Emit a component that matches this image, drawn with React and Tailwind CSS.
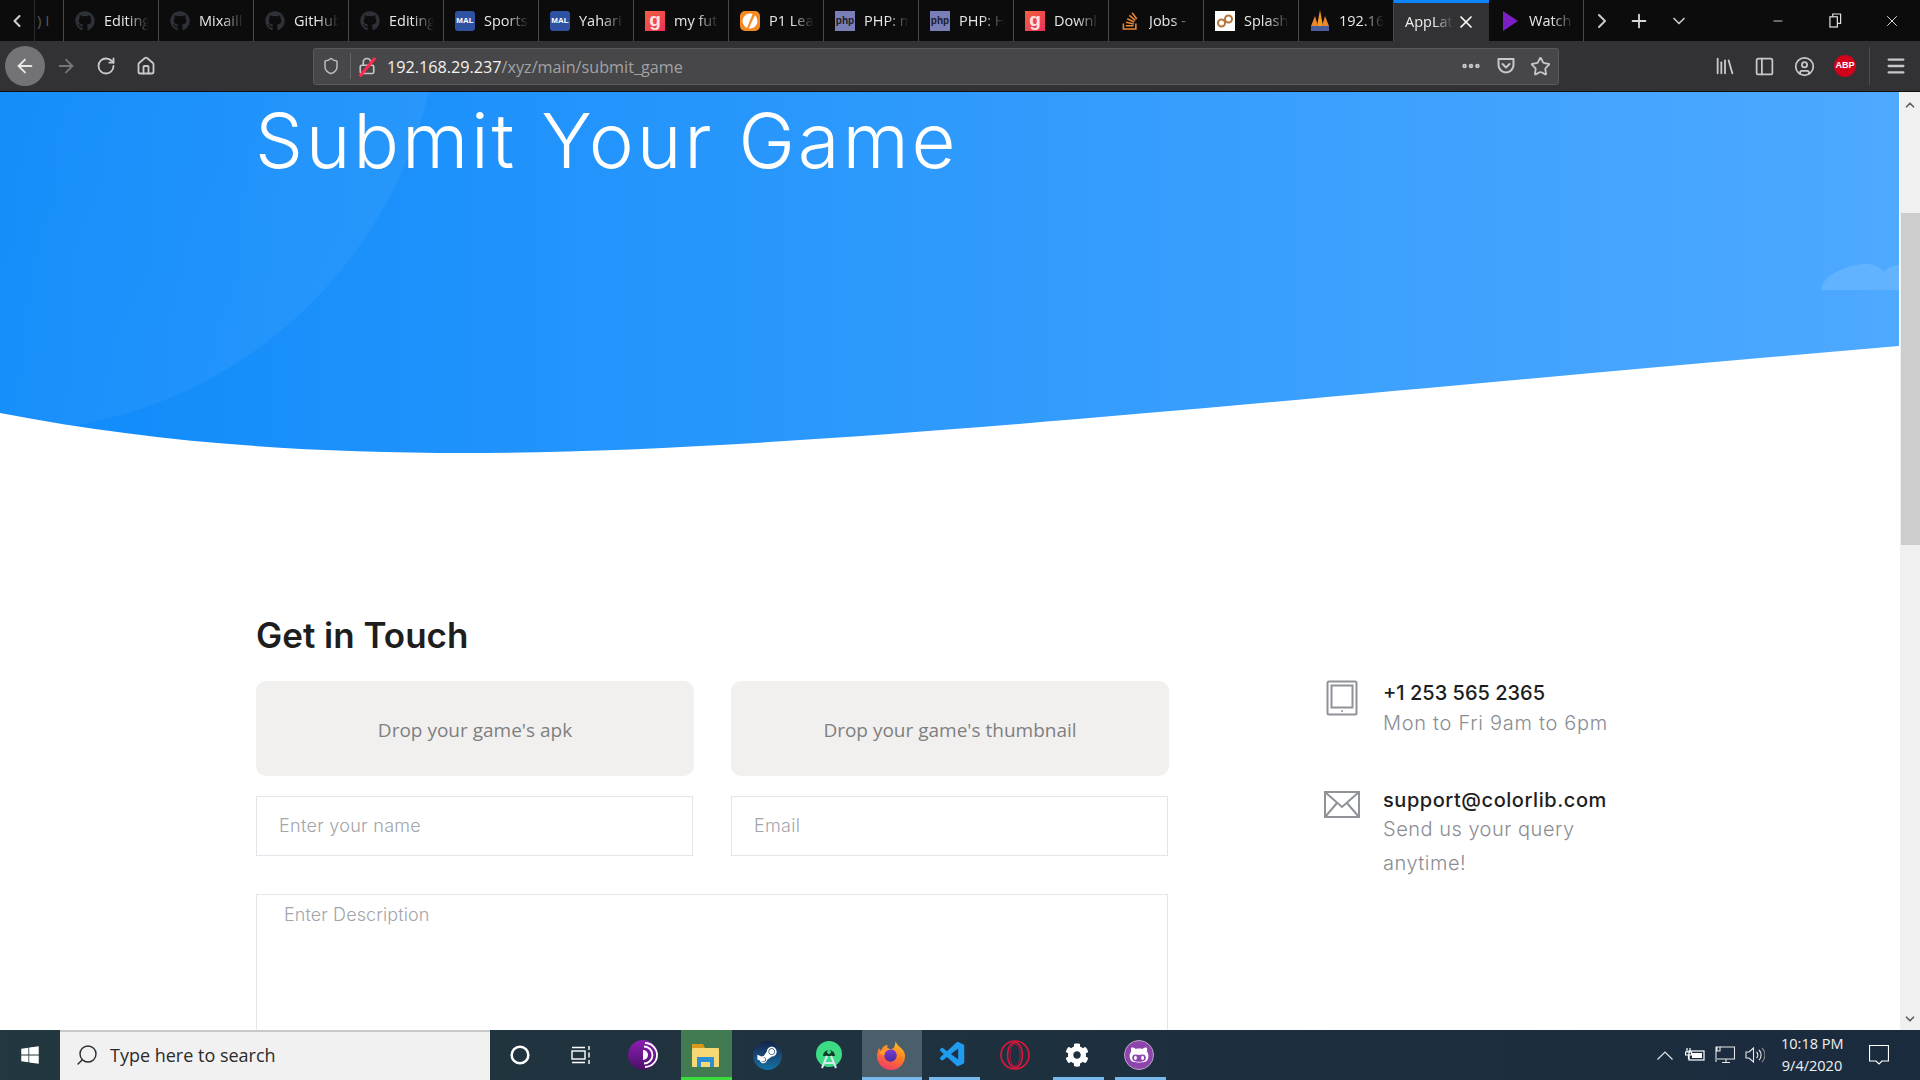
import React from 'react';
import {
  ArrowLeft,
  ArrowRight,
  RotateCw,
  Home,
  ChevronLeft,
  ChevronRight,
  ChevronDown,
  ChevronUp,
  Plus,
  Minus,
  X,
  Shield,
  Lock,
  Ellipsis,
  Star,
  Library,
  PanelLeft,
  CircleUser,
  Menu,
  Search,
  Circle,
} from 'lucide-react';
import { FaGithub, FaGithubAlt, FaWindows, FaStackOverflow, FaSteamSymbol, FaCog } from 'react-icons/fa';
import { VscVscode } from 'react-icons/vsc';

const Fav = ({ type }) => {
  if (type === 'gh') return <FaGithub className="w-5 h-5 text-[#2e3238]" />;
  if (type === 'mal')
    return (
      <div className="w-5 h-5 rounded-[3px] bg-[#2e51a2] text-white text-[8px] font-bold flex items-center justify-center font-['Liberation_Sans',sans-serif]">
        MAL
      </div>
    );
  if (type === 'g')
    return (
      <div className="w-5 h-5 bg-gradient-to-br from-[#f2603b] to-[#ec2c5c] text-[#ffe3dc] text-[19px] font-bold flex items-center justify-center leading-none pb-[3px] font-['Liberation_Sans',sans-serif]">
        g
      </div>
    );
  if (type === 'p1')
    return (
      <div className="w-5 h-5 rounded-[5px] bg-[#f58a23] flex items-center justify-center">
        <svg viewBox="0 0 20 20" className="w-5 h-5">
          <circle cx="10" cy="10" r="7.5" fill="#fff" />
          <path d="M13 2 L7 17 L9 17 L15 4 Z" fill="#f58a23" />
        </svg>
      </div>
    );
  if (type === 'php')
    return (
      <div className="w-5 h-[20px] bg-[#7a7fb8] text-[#1c1c28] text-[10px] font-bold flex items-center justify-center font-['Liberation_Sans',sans-serif]">
        php
      </div>
    );
  if (type === 'so') return <FaStackOverflow className="w-5 h-5 text-[#e8873a]" />;
  if (type === 'splash')
    return (
      <div className="w-5 h-5 bg-white flex items-center justify-center">
        <svg viewBox="0 0 20 20" className="w-5 h-5" fill="none" stroke="#b5763a" strokeWidth="2">
          <circle cx="6.5" cy="12" r="3.5" />
          <circle cx="13.5" cy="8" r="3.5" />
        </svg>
      </div>
    );
  if (type === 'paa')
    return (
      <svg viewBox="0 0 20 22" className="w-5 h-[22px]">
        <path d="M10 0 L13 16 L7 16 Z" fill="#f59a23" />
        <path d="M5 6 L8 16 L1 16 Z" fill="#e8872b" />
        <path d="M15 6 L19 16 L12 16 Z" fill="#e8872b" />
        <rect x="1" y="16" width="18" height="5" fill="#4a5a9a" />
      </svg>
    );
  if (type === 'play')
    return (
      <svg viewBox="0 0 20 22" className="w-5 h-[22px]">
        <path d="M3 1 L18 11 L3 21 Z" fill="#7b1fc4" />
      </svg>
    );
  return null;
};

const tabs = [
  { icon: 'gh', label: 'Editing' },
  { icon: 'gh', label: 'Mixaill' },
  { icon: 'gh', label: 'GitHub' },
  { icon: 'gh', label: 'Editing' },
  { icon: 'mal', label: 'Sports' },
  { icon: 'mal', label: 'Yahari' },
  { icon: 'g', label: 'my fut' },
  { icon: 'p1', label: 'P1 Lea' },
  { icon: 'php', label: 'PHP: m' },
  { icon: 'php', label: 'PHP: H' },
  { icon: 'g', label: 'Downl' },
  { icon: 'so', label: 'Jobs -' },
  { icon: 'splash', label: 'Splash' },
  { icon: 'paa', label: '192.16' },
  { active: true, label: 'AppLat' },
  { icon: 'play', label: 'Watch' },
];

const TabBar = () => (
  <div className="h-[41px] bg-[#0c0c0d] flex items-stretch shrink-0 font-['Open_Sans',sans-serif]">
    <div className="w-[35px] flex items-center justify-center border-r border-[#2c2c2e]">
      <ChevronLeft className="w-5 h-5 text-[#d0d0d0]" strokeWidth={2.5} />
    </div>
    <div className="w-[29px] border-r border-[#4a4a4c] flex items-center overflow-hidden pl-[2px] text-[15px] text-[#55595e] whitespace-nowrap">
      ) I
    </div>
    {tabs.map((tab, i) =>
      tab.active ? (
        <div
          key={i}
          className="w-[95px] bg-[#323234] border-t-[3px] border-[#0a84ff] flex items-center pl-[11px] text-[14.5px] text-[#f0f0f0]"
        >
          <span className="w-[48px] overflow-hidden whitespace-nowrap [mask-image:linear-gradient(to_right,black_60%,transparent)]">
            {tab.label}
          </span>
          <X className="w-5 h-5 ml-[3px] text-white" strokeWidth={2} />
        </div>
      ) : (
        <div key={i} className="w-[95px] border-r border-[#4a4a4c] flex items-center pl-[11px] gap-[9px]">
          <div className="w-5 flex justify-center shrink-0">
            <Fav type={tab.icon} />
          </div>
          <span className="w-[45px] overflow-hidden whitespace-nowrap text-[14.5px] text-[#e8e8e8] [mask-image:linear-gradient(to_right,black_50%,transparent)]">
            {tab.label}
          </span>
        </div>
      ),
    )}
    <div className="w-[35px] flex items-center justify-center">
      <ChevronRight className="w-6 h-6 text-[#c8c8c8]" strokeWidth={2} />
    </div>
    <div className="w-[39px] flex items-center justify-center">
      <Plus className="w-[22px] h-[22px] text-[#d8d8d8]" strokeWidth={2} />
    </div>
    <div className="w-[42px] flex items-center justify-center">
      <ChevronDown className="w-5 h-5 text-[#c8c8c8]" strokeWidth={2} />
    </div>
    <div className="flex-1" />
    <div className="w-[59px] flex items-center justify-center">
      <Minus className="w-[14px] h-[14px] text-[#e0e0e0]" strokeWidth={1.5} />
    </div>
    <div className="w-[57px] flex items-center justify-center">
      <svg viewBox="0 0 14 16" className="w-[13px] h-[15px]" fill="none" stroke="#e0e0e0" strokeWidth="1.3">
        <rect x="1" y="4" width="8" height="11" />
        <path d="M4 4 V1 H12.5 V11 H9" />
      </svg>
    </div>
    <div className="w-[56px] flex items-center justify-center">
      <X className="w-[18px] h-[18px] text-[#e0e0e0]" strokeWidth={1.3} />
    </div>
  </div>
);

const ToolBar = () => (
  <div className="h-[51px] bg-[#323234] border-b border-[#101012] flex items-center shrink-0 font-['Open_Sans',sans-serif] text-[#c8c8ca]">
    <div className="w-10 h-10 ml-[5px] rounded-full bg-[#737375] flex items-center justify-center shrink-0">
      <ArrowLeft className="w-[22px] h-[22px] text-[#e8e8e8]" strokeWidth={2} />
    </div>
    <ArrowRight className="w-[22px] h-[22px] ml-[10px] text-[#77777a] shrink-0" strokeWidth={2} />
    <RotateCw className="w-5 h-5 ml-[19px] shrink-0" strokeWidth={2.2} />
    <Home className="w-5 h-5 ml-[20px] shrink-0" strokeWidth={2.2} />

    <div className="w-[1246px] h-[37px] ml-[157px] bg-[#474749] border border-[#5a5a5c] rounded-[3px] flex items-center shrink-0">
      <Shield className="w-[18px] h-[18px] ml-[8px] text-[#bcbcbe]" strokeWidth={2} />
      <div className="w-px h-[26px] bg-[#666668] ml-[10px]" />
      <div className="relative ml-[7px] w-[18px] h-[18px]">
        <Lock className="w-[18px] h-[18px] text-[#c8c8ca]" strokeWidth={2.2} />
        <div className="absolute left-[8px] -top-[2px] w-[2.5px] h-[24px] bg-[#ff2a50] rotate-[40deg]" />
      </div>
      <span className="ml-[11px] pt-[3px] text-[16.2px] text-[#f2f2f2] whitespace-nowrap">
        192.168.29.237<span className="text-[#a2a2a4]">/xyz/main/submit_game</span>
      </span>
      <div className="flex-1" />
      <Ellipsis className="w-[22px] h-[22px] text-[#c8c8ca]" strokeWidth={3} />
      <svg viewBox="0 0 20 20" className="w-5 h-5 ml-[14px]" fill="none" stroke="#c8c8ca" strokeWidth="2" strokeLinecap="round" strokeLinejoin="round">
        <path d="M2.5 3 H17.5 V9 A7.5 7.5 0 0 1 2.5 9 Z" />
        <path d="M6.5 8 L10 11.5 L13.5 8" />
      </svg>
      <Star className="w-[21px] h-[21px] ml-[14px] mr-[7px]" strokeWidth={2} />
    </div>

    <Library className="w-[22px] h-[22px] ml-[155px] shrink-0" strokeWidth={2} />
    <PanelLeft className="w-[21px] h-[21px] ml-[18px] shrink-0" strokeWidth={2} />
    <CircleUser className="w-[21px] h-[21px] ml-[19px] shrink-0" strokeWidth={2} />
    <div className="w-[22px] h-[22px] ml-[19px] rounded-full bg-[#d0021b] text-white text-[9px] font-bold flex items-center justify-center shrink-0 font-['Liberation_Sans',sans-serif]">
      ABP
    </div>
    <div className="w-px h-[38px] bg-[#4e4e50] ml-[13px] shrink-0" />
    <Menu className="w-[22px] h-[22px] ml-[15px] shrink-0" strokeWidth={2.5} />
  </div>
);

const Hero = () => (
  <div className="relative h-[361px] shrink-0">
    <svg viewBox="0 0 1899 361" preserveAspectRatio="none" className="absolute inset-0 w-full h-full">
      <defs>
        <linearGradient id="heroFill" x1="0" y1="0" x2="1" y2="0">
          <stop offset="0" stopColor="#0f8bfa" />
          <stop offset="1" stopColor="#4ea9ff" />
        </linearGradient>
        <linearGradient id="arcFill" x1="0" y1="0" x2="1" y2="0.6">
          <stop offset="0.3" stopColor="#ffffff" stopOpacity="0" />
          <stop offset="1" stopColor="#ffffff" stopOpacity="0.05" />
        </linearGradient>
        <clipPath id="heroClip">
          <path d="M0 321 C150 350 300 361 465 361 C800 361 1300 305 1899 254 V0 H0 Z" />
        </clipPath>
      </defs>
      <g clipPath="url(#heroClip)">
        <rect width="1899" height="361" fill="url(#heroFill)" />
        <circle cx="0" cy="-100" r="440" fill="url(#arcFill)" />
        <path d="M1821 198 C1822 182 1850 172 1866 172 C1876 172 1880 176 1884 180 C1888 175 1894 173 1899 173 V198 Z" fill="#ffffff" fillOpacity="0.12" />
      </g>
    </svg>
    <h1 className="relative pl-[255px] pt-[2px] text-[76px] leading-[92px] tracking-[2.8px] font-light text-white whitespace-nowrap">
      Submit Your Game
    </h1>
  </div>
);

const DropBox = ({ label }) => (
  <div className="flex-1 h-[95px] rounded-[10px] bg-[#f1f0ef] flex items-center justify-center pt-[3px] text-[19px] text-[#7f7f7f] font-['Open_Sans',sans-serif]">
    {label}
  </div>
);

const Field = ({ placeholder }) => (
  <input
    placeholder={placeholder}
    readOnly
    className="flex-1 min-w-0 h-[60px] border border-[#e4e5ea] pl-[22px] pb-[2px] text-[18px] tracking-[0.3px] font-light placeholder:text-[#a2a5aa] outline-none"
  />
);

const ContactForm = () => (
  <div className="w-[913px] shrink-0">
    <h2 className="text-[35px] leading-[44px] font-semibold text-[#1e1e1e]">Get in Touch</h2>
    <div className="flex gap-[37px] mt-[24px]">
      <DropBox label="Drop your game's apk" />
      <DropBox label="Drop your game's thumbnail" />
    </div>
    <div className="flex gap-[38px] mt-[20px] pr-px">
      <Field placeholder="Enter your name" />
      <Field placeholder="Email" />
    </div>
    <textarea
      placeholder="Enter Description"
      readOnly
      className="block w-[912px] h-[260px] mt-[38px] border border-[#e4e5ea] pl-[27px] pt-[6px] text-[18px] tracking-[0.1px] font-light placeholder:text-[#a2a5aa] outline-none resize-none"
    />
  </div>
);

const ContactInfo = () => (
  <div className="ml-[154px] w-[250px] pt-[65px]">
    <div className="flex">
      <div className="w-[60px] shrink-0 pt-[2px] pl-[3px]">
        <svg viewBox="0 0 32 36" className="w-8 h-9" fill="none" stroke="#8f9297" strokeWidth="2">
          <rect x="1.5" y="1.5" width="29" height="33" rx="1.5" />
          <rect x="5.5" y="5.5" width="21" height="22" />
          <circle cx="16" cy="31" r="1" fill="#8f9297" stroke="none" />
        </svg>
      </div>
      <div>
        <p className="text-[20px] leading-[30px] font-medium text-[#1e1e1e]">+1 253 565 2365</p>
        <p className="text-[20px] leading-[30px] tracking-[0.7px] font-light text-[#8a8d93] whitespace-nowrap">Mon to Fri 9am to 6pm</p>
      </div>
    </div>
    <div className="flex mt-[47px]">
      <div className="w-[60px] shrink-0 pt-[6px] pl-[1px]">
        <svg viewBox="0 0 36 28" className="w-9 h-7" fill="none" stroke="#8f9297" strokeWidth="2">
          <rect x="1" y="1" width="34" height="25" />
          <path d="M1 1 L18 16 L35 1" />
          <path d="M1 26 L13 12 M35 26 L23 12" />
        </svg>
      </div>
      <div>
        <p className="text-[20px] leading-[30px] tracking-[0.55px] font-medium text-[#1e1e1e]">support@colorlib.com</p>
        <p className="-mt-[3px] text-[20px] leading-[34px] tracking-[0.5px] font-light text-[#8a8d93] w-[230px]">Send us your query anytime!</p>
      </div>
    </div>
  </div>
);

const ScrollBar = () => (
  <div className="w-[21px] bg-[#f0f0f0] border-l border-white flex flex-col items-center shrink-0">
    <ChevronUp className="w-[14px] h-[14px] mt-[6px] text-[#606060]" strokeWidth={3} />
    <div className="w-[19px] h-[332px] mt-[101px] bg-[#cdcdcd]" />
    <div className="flex-1" />
    <ChevronDown className="w-[14px] h-[14px] mb-[4px] text-[#606060]" strokeWidth={3} />
  </div>
);

const Slot = ({ highlight, line, children }) => (
  <div className="w-[62px] h-full relative flex items-center justify-center">
    {highlight && <div className={`absolute inset-y-0 ${highlight}`} />}
    <div className="relative flex items-center justify-center">{children}</div>
    {line && <div className={`absolute bottom-0 h-[3px] ${line}`} />}
  </div>
);

const TorIcon = () => (
  <svg viewBox="0 0 30 30" className="w-[30px] h-[30px]" fill="none">
    <defs>
      <linearGradient id="torFill" x1="0" y1="0" x2="0" y2="1">
        <stop offset="0" stopColor="#8a1fb0" />
        <stop offset="1" stopColor="#4a0f6a" />
      </linearGradient>
    </defs>
    <circle cx="15" cy="15" r="15" fill="url(#torFill)" />
    <path d="M15 10 A5 5 0 0 1 15 20 Z" fill="#fff" />
    <path d="M16 6.5 A8.5 8.5 0 0 1 16 23.5 M17 3 A12 12 0 0 1 17 27" stroke="#fff" strokeWidth="1.8" />
  </svg>
);

const FilesIcon = () => (
  <svg viewBox="0 0 27 23" className="w-[27px] h-[23px]">
    <path d="M0 0 H11 L13 4 H0 Z" fill="#d99a1c" />
    <rect x="0" y="4" width="27" height="19" rx="1" fill="#f8d775" />
    <rect x="5" y="13" width="17" height="10" fill="#2d8fd5" />
    <rect x="9" y="18" width="9" height="5" fill="#f8d775" />
  </svg>
);

const AndroidStudioIcon = () => (
  <svg viewBox="0 0 30 30" className="w-[30px] h-[30px]" fill="none">
    <circle cx="15" cy="14" r="13" fill="#3ddc84" />
    <path d="M9 16 A6 6 0 0 1 21 16 Z" fill="#0f3b2a" />
    <circle cx="15" cy="12" r="2" fill="#3ddc84" />
    <path d="M13 16 L8 28 M17 16 L22 28 M10 23 H20" stroke="#d8e8f0" strokeWidth="2" />
  </svg>
);

const FirefoxIcon = () => (
  <svg viewBox="0 0 30 30" className="w-[30px] h-[30px]">
    <defs>
      <linearGradient id="foxOuter" x1="0.7" y1="0" x2="0.3" y2="1">
        <stop offset="0" stopColor="#ffc524" />
        <stop offset="0.5" stopColor="#ff7a26" />
        <stop offset="1" stopColor="#f0386b" />
      </linearGradient>
      <linearGradient id="foxInner" x1="0" y1="0" x2="0" y2="1">
        <stop offset="0" stopColor="#7a3cd6" />
        <stop offset="1" stopColor="#4c2a9e" />
      </linearGradient>
    </defs>
    <path d="M20 0 C19 3 22 5 25 8 C28 11 29 13 29 16 A14 14 0 0 1 1 16 C1 13 2 10 3 8 L5 11 C6 7 9 5 12 5 C10 7 12 9 15 9 C19 9 19 4 20 0 Z" fill="url(#foxOuter)" />
    <circle cx="14.5" cy="15.5" r="6.2" fill="url(#foxInner)" />
    <path d="M3 13 C7 8 13 8 15 9.5 C11 9.5 8.5 12 8.5 15 C6.5 15 4.5 14.5 3 13 Z" fill="#ff9a2e" />
  </svg>
);

const OperaIcon = () => (
  <svg viewBox="0 0 30 30" className="w-[30px] h-[30px]" fill="none" stroke="#e0163d" strokeWidth="1.6">
    <circle cx="15" cy="15" r="14" />
    <ellipse cx="15" cy="15" rx="7.5" ry="12.5" />
    <ellipse cx="15" cy="15" rx="5" ry="11" stroke="#a81445" strokeWidth="1" />
  </svg>
);

const TaskBar = () => (
  <div className="h-[50px] shrink-0 flex items-center bg-gradient-to-r from-[#22373f] to-[#1b2b3e] text-white font-['Open_Sans',sans-serif]">
    <div className="w-[60px] h-full flex items-center justify-center">
      <FaWindows className="w-5 h-5" />
    </div>
    <div className="w-[430px] h-full bg-[#f1f1f1] flex items-center pl-[15px] pb-[2px] text-[18px] text-[#2b2b2b] border-t-2 border-[#c8c8c8]">
      <Search className="w-[24px] h-[24px] -scale-x-100" strokeWidth={1.4} />
      <span className="ml-[11px]">Type here to search</span>
    </div>
    <div className="w-[60px] h-full flex items-center justify-center">
      <Circle className="w-5 h-5" strokeWidth={3} />
    </div>
    <div className="w-[62px] h-full flex items-center justify-center">
      <svg viewBox="0 0 20 20" className="w-5 h-5" fill="none" stroke="#fff" strokeWidth="1.4">
        <rect x="1" y="6" width="13" height="8" />
        <path d="M1 2.5 H14 M1 17.5 H14 M18 1 V5 M18 7.5 V12.5 M18 15 V19" />
      </svg>
    </div>
    <Slot>
      <TorIcon />
    </Slot>
    <Slot highlight="left-[7px] right-[4px] bg-[#427a52]" line="left-[7px] right-[4px] bg-[#3ddc3d]">
      <FilesIcon />
    </Slot>
    <Slot>
      <div className="w-[29px] h-[29px] rounded-full bg-gradient-to-b from-[#14244a] to-[#1173a8] flex items-center justify-center">
        <FaSteamSymbol className="w-[22px] h-[22px] text-white" />
      </div>
    </Slot>
    <Slot>
      <AndroidStudioIcon />
    </Slot>
    <Slot highlight="left-[2px] right-0 bg-[#4b5f6b]" line="left-[2px] right-0 bg-[#76b9ed]">
      <FirefoxIcon />
    </Slot>
    <Slot line="left-[7px] right-[4px] bg-[#76b9ed]">
      <VscVscode className="w-[30px] h-[30px] text-[#1f9cf0]" />
    </Slot>
    <Slot>
      <OperaIcon />
    </Slot>
    <Slot line="left-[7px] right-[4px] bg-[#76b9ed]">
      <FaCog className="w-[24px] h-[24px] text-white" />
    </Slot>
    <Slot line="left-[7px] right-[4px] bg-[#76b9ed]">
      <div className="w-[30px] h-[30px] rounded-full bg-[#8e44ad] border border-[#b9a6c4] flex items-center justify-center">
        <FaGithubAlt className="w-[20px] h-[20px] text-white" />
      </div>
    </Slot>
    <div className="flex-1" />
    <svg viewBox="0 0 16 9" className="w-4 h-[9px] shrink-0" fill="none" stroke="#e8e8e8" strokeWidth="1.2">
      <path d="M0.5 8.5 L8 1 L15.5 8.5" />
    </svg>
    <svg viewBox="0 0 20 14" className="w-5 h-[14px] ml-[12px] shrink-0" fill="none" stroke="#fff" strokeWidth="1.2">
      <path d="M2 0 V4 M5 0 V4 M0.5 4 H6.5 V7 H0.5 Z M3.5 7 V11" />
      <rect x="4" y="3" width="15" height="9" />
      <rect x="7" y="5" width="10" height="5" fill="#fff" stroke="none" />
    </svg>
    <svg viewBox="0 0 20 18" className="w-5 h-[18px] ml-[10px] shrink-0" fill="none" stroke="#e8e8e8" strokeWidth="1.1">
      <path d="M5 1 H19.5 V13 H2" />
      <path d="M1 1 H5 V5 H1 Z M1 5 V16 M2 1 V5" />
      <path d="M11 13 V16 M7 16.5 H15" />
    </svg>
    <svg viewBox="0 0 20 16" className="w-5 h-4 ml-[10px] shrink-0" fill="none" stroke="#e8e8e8" strokeWidth="1.1">
      <path d="M1 5 H4 L8.5 1 V15 L4 11 H1 Z" />
      <path d="M11.5 5 A4 4 0 0 1 11.5 11 M14 3 A7 7 0 0 1 14 13" />
      <path d="M17 1 A10 10 0 0 1 17 15" stroke="#7d8690" />
    </svg>
    <div className="w-[62px] ml-[16px] text-center text-[14.5px] leading-[22px] text-[#f0f0f0] whitespace-nowrap shrink-0">
      <div>10:18 PM</div>
      <div>9/4/2020</div>
    </div>
    <svg viewBox="0 0 20 20" className="w-5 h-5 ml-[26px] mr-[31px] shrink-0" fill="none" stroke="#fff" strokeWidth="1.2">
      <path d="M0.5 0.5 H19.5 V16 H13 L10 19 L7 16 H0.5 Z" />
    </svg>
  </div>
);

export default function App() {
  return (
    <div className="h-screen flex flex-col overflow-hidden bg-white">
      <TabBar />
      <ToolBar />
      <div className="flex-1 min-h-0 flex overflow-hidden font-['Inter',sans-serif]">
        <div className="flex-1 min-w-0 flex flex-col">
          <Hero />
          <div className="flex pl-[256px] pt-[160px]">
            <ContactForm />
            <ContactInfo />
          </div>
        </div>
        <ScrollBar />
      </div>
      <TaskBar />
    </div>
  );
}
